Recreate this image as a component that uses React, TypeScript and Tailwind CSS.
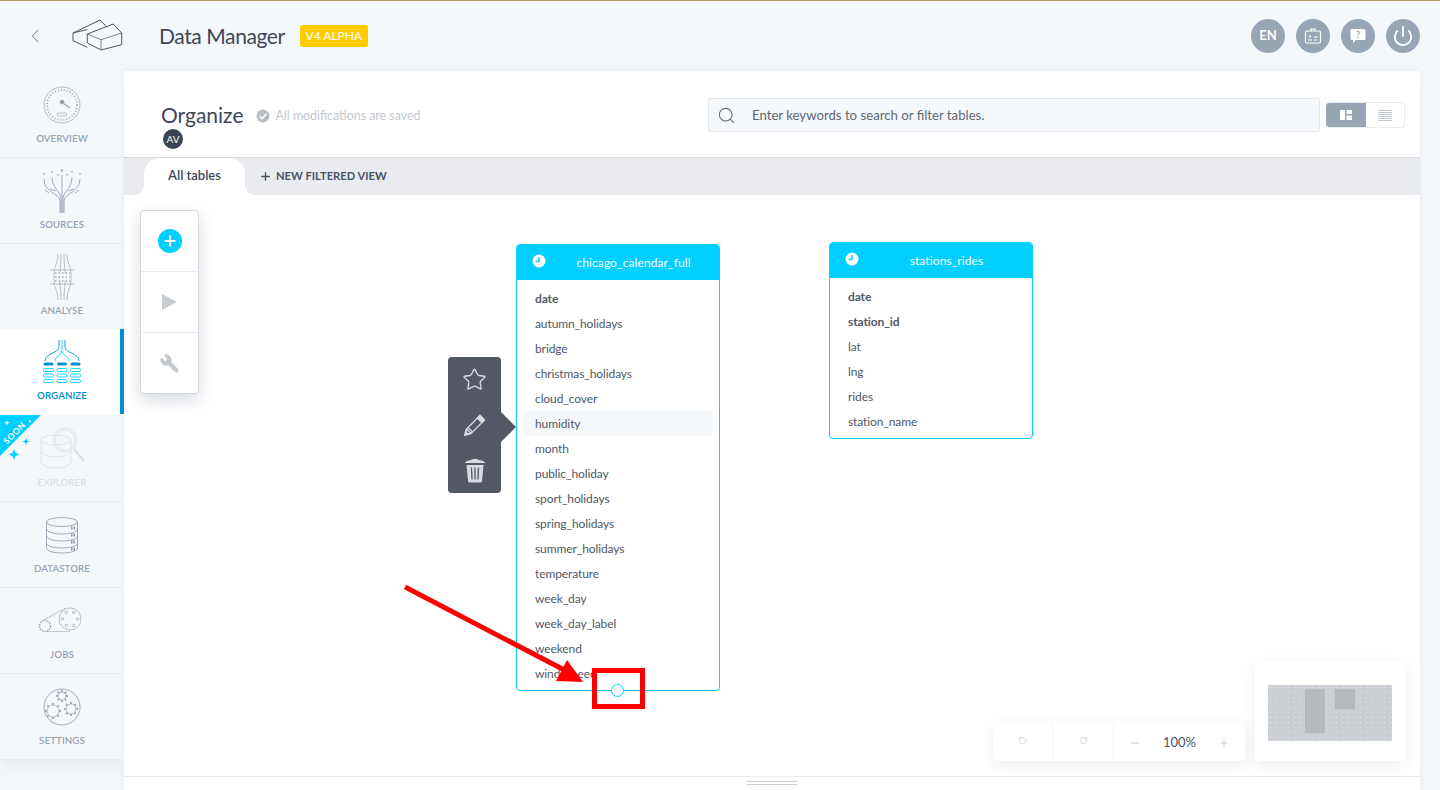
import { Plus, Search, Star, Wrench, ChevronLeft, RotateCcw, RotateCw, Minus, Power } from "lucide-react";

const font = "font-['Lato','Noto_Sans',sans-serif]";

const OverviewIcon = () => (
  <svg width="48" height="48" viewBox="0 0 48 48" fill="none" stroke="#a3adba" strokeWidth="0.8">
    <circle cx="24" cy="24" r="18" />
    <circle cx="24" cy="24" r="15" strokeDasharray="1 2" strokeWidth="2" />
    <circle cx="24" cy="21" r="2" fill="#8e99a9" />
    <path d="M25 22l7 5" strokeWidth="1.2" />
    <rect x="19" y="32" width="10" height="3" rx="1.5" />
  </svg>
);

const SourcesIcon = () => (
  <svg width="48" height="48" viewBox="0 0 48 48" fill="none" stroke="#98a3b3" strokeWidth="0.9">
    <path d="M22 46V34C22 26 6 26 6 12" />
    <path d="M23 46V32C23 24 14 22 14 10" />
    <path d="M24 46V8" />
    <path d="M25 46V32C25 24 34 22 34 10" />
    <path d="M26 46V34C26 26 42 26 42 12" />
    <path d="M11 26l-4-3M37 26l4-3M18 24l-6 -2M30 24l6-2" />
    <path d="M6 6v1.500M14 4v1.500M20 7v1.500M24 2v3M29 7v1.500M34 4v1.500M42 6v1.500" strokeWidth="1.400" />
  </svg>
);

const AnalyseIcon = () => (
  <svg width="48" height="48" viewBox="0 0 48 48" fill="none" stroke="#a3adba" strokeWidth="0.8">
    <path d="M20 1c0 10-4 12-4 19v8c0 7 4 9 4 19M23 1c0 10-1 12-1 19M26 1c0 10 1 12 1 19M29 1c0 10 4 12 4 19v8c0 7-4 9-4 19M23 47c0-10-1-12-1-19M26 47c0-10 1-12 1-19" />
    <path d="M12 17h24M12 31h24" />
    <path d="M17 20h15M17 24h15M17 28h15" strokeDasharray="1.5 2" strokeWidth="1.5" />
  </svg>
);

const OrganizeIcon = () => (
  <svg width="48" height="48" viewBox="0 0 48 48" fill="none" stroke="#00cfff" strokeWidth="0.9">
    <path d="M21 2v7c0 6-14 6-14 14" stroke="#0090cf" />
    <path d="M27 2v7c0 6 14 6 14 14" stroke="#0090cf" />
    <path d="M24 2v11c0 4-7 5-7 10M24 13c0 4 7 5 7 10" />
    <path d="M7 26h7M20.500 26h7M34 26h7" stroke="#0090cf" strokeWidth="3" strokeLinecap="round" />
    {[7, 20.5, 34].map((x) => (
      <g key={x}>
        <rect x={x - 1.5} y="30.500" width="10" height="3" rx="1.200" />
        <rect x={x - 1.5} y="36" width="10" height="3" rx="1.200" />
        <rect x={x - 1.5} y="41.500" width="10" height="3" rx="1.200" />
      </g>
    ))}
  </svg>
);

const ExplorerIcon = () => (
  <svg width="56" height="48" viewBox="0 0 56 48" fill="none" stroke="#dcdfe3" strokeWidth="0.9">
    <ellipse cx="22" cy="15" rx="15" ry="5" />
    <path d="M7 15v22c0 3 7 6 15 6s15-3 15-6V15M7 26c0 3 7 6 15 6s15-3 15-6" />
    <circle cx="31" cy="15" r="12" />
    <circle cx="31" cy="15" r="10" />
    <path d="M40 24l10 12" strokeWidth="2.2" />
  </svg>
);

const DatastoreIcon = () => (
  <svg width="48" height="48" viewBox="0 0 48 48" fill="none" stroke="#8b97a9" strokeWidth="0.8">
    <ellipse cx="24" cy="11" rx="15.5" ry="4.5" />
    <path d="M8.5 11v26c0 3 7 5 15.5 5s15.500-2 15.500-5V11M8.500 18c0 3 7 5 15.500 5s15.500-2 15.500-5M8.500 25c0 3 7 5 15.500 5s15.500-2 15.500-5M8.500 32c0 3 7 5 15.500 5s15.500-2 15.500-5" />
    <path d="M33 17h5M33 24h5M33 31h5M33 38h4" strokeWidth="3" strokeDasharray="1.5 1" />
  </svg>
);

const JobsIcon = () => (
  <svg width="48" height="48" viewBox="0 0 48 48" fill="none" stroke="#a3adba" strokeWidth="0.8">
    <circle cx="32" cy="22" r="11" />
    <circle cx="7" cy="29" r="5.500" strokeWidth="1.500" strokeDasharray="1.500 1" />
    <path d="M5 23.500L27 11.500M7 34.500h25" strokeDasharray="1 0.6" strokeWidth="1.100" />
    {[0, 60, 120, 180, 240, 300].map((a) => (
      <circle key={a} cx={32 + 7.500 * Math.cos((a * Math.PI) / 180)} cy={22 + 7.500 * Math.sin((a * Math.PI) / 180)} r="1.300" />
    ))}
  </svg>
);

const gearTeeth = (cx: number, cy: number, r: number) =>
  [0, 45, 90, 135, 180, 225, 270, 315].map((a) => (
    <path
      key={a}
      d={`M${cx + r * Math.cos((a * Math.PI) / 180)} ${cy + r * Math.sin((a * Math.PI) / 180)}L${cx + (r + 2) * Math.cos((a * Math.PI) / 180)} ${cy + (r + 2) * Math.sin((a * Math.PI) / 180)}`}
      strokeWidth="2"
    />
  ));

const SettingsIcon = () => (
  <svg width="48" height="48" viewBox="0 0 48 48" fill="none" stroke="#a3adba" strokeWidth="0.8">
    <circle cx="24" cy="24" r="18" stroke="#8b97a9" />
    <circle cx="24" cy="13" r="4" />
    {gearTeeth(24, 13, 4)}
    <circle cx="15" cy="28" r="6" />
    {gearTeeth(15, 28, 6)}
    <circle cx="33" cy="26" r="5" />
    {gearTeeth(33, 26, 5)}
  </svg>
);

const navItems = [
  { label: "Overview", icon: <OverviewIcon /> },
  { label: "Sources", icon: <SourcesIcon /> },
  { label: "Analyse", icon: <AnalyseIcon /> },
  { label: "Organize", icon: <OrganizeIcon />, active: true },
  { label: "Explorer", icon: <ExplorerIcon />, soon: true },
  { label: "Datastore", icon: <DatastoreIcon /> },
  { label: "Jobs", icon: <JobsIcon /> },
  { label: "Settings", icon: <SettingsIcon /> },
];

const Sidebar = () => (
  <div className="w-[124px] shrink-0 pt-px">
    <div className="shadow-[0_6px_12px_rgba(120,135,155,0.12)]">
      {navItems.map((item) => (
        <div
          key={item.label}
          className={`relative flex h-[86px] flex-col items-center border-b pt-[9px] ${
            item.active ? "-mt-px mb-px border-white bg-white" : "border-[#e8ecf1]"
          }`}
        >
          <div className="flex h-12 items-center justify-center">{item.icon}</div>
          <span
            className={`mt-[2px] text-[9.700px] leading-[14px] font-semibold tracking-[0.1px] uppercase ${
              item.active ? "font-bold text-[#0090cf]" : item.soon ? "text-[#dcdfe3]" : "text-[#98a3b3]"
            }`}
          >
            {item.label}
          </span>
          {item.active && <div className="absolute top-0 right-0 bottom-0 w-1 bg-[#0090cf]" />}
          {item.soon && <SoonRibbon />}
        </div>
      ))}
    </div>
  </div>
);

const SoonRibbon = () => (
  <div className="absolute top-[-1px] left-0">
    <svg width="42" height="46" viewBox="0 0 42 46">
      <path d="M0 0H41L0 41Z" fill="#00cfff" />
      <path d="M14 34l1.500 4 4 1.500-4 1.500-1.500 4-1.500-4-4-1.500 4-1.500zM26 23l1 2.500 2.500 1-2.500 1-1 2.500-1-2.500-2.500-1 2.500-1z" fill="#00cfff" />
      <path d="M7 5l.8 2 2 .8-2 .8-.8 2-.8-2-2-.8 2-.8zM30 4.500l.5 1.300 1.300.5-1.300.5-.5 1.300-.5-1.300-1.300-.5 1.300-.5z" fill="#fff" />
    </svg>
    <span className="absolute top-[13px] left-[1px] -rotate-45 text-[8.500px] leading-[10px] font-bold tracking-[0.5px] text-white">
      SOON
    </span>
  </div>
);

const Logo = () => (
  <svg width="52" height="34" viewBox="0 0 52 34" fill="none" stroke="#4a5464" strokeWidth="1">
    <path d="M15.300 10.500L1 14v7.700l14.300 6.600M1 14L28 1l7 7.300" />
    <path d="M15.300 15L41.300 5l8.400 9v11.700L29 31l-13.700-7V15" />
    <path d="M15.300 15L29 20.700V31M29 20.700L49.700 14" strokeWidth="0.7" />
  </svg>
);

const CircleBtn = ({ children }: { children: React.ReactNode }) => (
  <div className="flex h-[34px] w-[34px] items-center justify-center rounded-full bg-[#98a5b5] text-[13px] font-bold text-white">
    {children}
  </div>
);

const TopBar = () => (
  <div className="flex h-[71px] shrink-0 items-center border-t border-[#b89a6b] pr-[20px] pl-[24px]">
    <ChevronLeft size={22} strokeWidth={1} className="text-[#5d6675]" />
    <div className="ml-[26px]">
      <Logo />
    </div>
    <span className="ml-[35px] text-[21px] tracking-[-0.4px] text-[#3e4757]">Data Manager</span>
    <span className="ml-[15px] flex h-[22px] w-[68px] items-center justify-center rounded-[2px] bg-[#ffcc00] text-[12px] text-white">
      V4 ALPHA
    </span>
    <div className="ml-auto flex gap-[11px]">
      <CircleBtn>EN</CircleBtn>
      <CircleBtn>
        <svg width="20" height="20" viewBox="0 0 20 20" fill="none" stroke="#fff" strokeWidth="1.200">
          <rect x="2.500" y="5" width="15" height="12" rx="1.500" />
          <path d="M8 5V3h4v2M5 14h4M11 11h4M11 14h3M7 9v3" />
        </svg>
      </CircleBtn>
      <CircleBtn>
        <svg width="20" height="20" viewBox="0 0 20 20">
          <path d="M4 3h12a1.500 1.500 0 0 1 1.500 1.500v8A1.500 1.500 0 0 1 16 14H8l-3 3v-3H4a1.500 1.500 0 0 1-1.500-1.500v-8A1.500 1.500 0 0 1 4 3z" fill="#fff" />
          <text x="10" y="12" textAnchor="middle" fontSize="9" fontWeight="700" fill="#98a5b5">?</text>
        </svg>
      </CircleBtn>
      <CircleBtn>
        <Power size={22} strokeWidth={2} />
      </CircleBtn>
    </div>
  </div>
);

const PanelHeader = () => (
  <div className="flex h-[86px] shrink-0 items-start pt-[27px] pr-[15px] pl-[37px]">
    <div>
      <div className="flex items-center">
        <span className="text-[21px] leading-[34px] text-[#3e4757]">Organize</span>
        <svg width="14" height="14" viewBox="0 0 14 14" className="mt-[2px] ml-[12px]">
          <circle cx="7" cy="7" r="6.500" fill="#b9bec6" />
          <path d="M3.800 7.200l2.300 2.300 4.300-4.600" fill="none" stroke="#fff" strokeWidth="1.600" />
        </svg>
        <span className="mt-[2px] ml-[6px] text-[12.400px] text-[#c5c9ce]">All modifications are saved</span>
      </div>
      <div className="-mt-[3px] ml-[2px] flex h-5 w-5 items-center justify-center rounded-full bg-[#3c4353] text-[10px] text-white">
        AV
      </div>
    </div>
    <div className="ml-auto flex items-center">
      <div className="flex h-[34px] w-[612px] items-center rounded-[2px] border border-[#e4e8ed] bg-[#f6f9fc] pl-[8px]">
        <Search size={19} strokeWidth={1.300} className="text-[#5f6b7b]" />
        <span className="mt-px ml-[16px] text-[13.200px] text-[#5d6675]">Enter keywords to search or filter tables.</span>
      </div>
      <div className="ml-[6px] flex h-[26px] w-[79px] overflow-hidden rounded-[4px] border border-l-0 border-[#e8ecf1]">
        <div className="flex w-[40px] items-center justify-center bg-[#98a5b5]">
          <svg width="12" height="10" viewBox="0 0 12 10" fill="#fff">
            <rect width="5" height="10" />
            <rect x="6.500" width="5.500" height="4" />
            <rect x="6.500" y="5.500" width="5.500" height="4.500" />
          </svg>
        </div>
        <div className="flex flex-1 items-center justify-center">
          <svg width="14" height="11" viewBox="0 0 14 11" stroke="#c3c8cf" strokeWidth="1">
            <path d="M0 .500h14M0 2.500h14M0 4.500h14M0 6.500h14M0 8.500h14M0 10.500h14" />
          </svg>
        </div>
      </div>
    </div>
  </div>
);

const TabBar = () => (
  <div className="flex h-[38px] shrink-0 items-end border-t border-dotted border-[#c4c9d0] bg-[#e9ebef] pl-[20px]">
    <div className="relative flex h-[37px] w-[101px] items-center justify-center rounded-t-[16px] bg-white pb-[1px] text-[13px] font-semibold text-[#3e4757] before:absolute before:bottom-0 before:left-[-10px] before:h-[10px] before:w-[10px] before:bg-[radial-gradient(circle_at_0_0,transparent_10px,white_10px)] after:absolute after:right-[-10px] after:bottom-0 after:h-[10px] after:w-[10px] after:bg-[radial-gradient(circle_at_100%_0,transparent_10px,white_10px)]">
      All tables
    </div>
    <div className="ml-[14px] flex h-[37px] items-center gap-[4px] text-[11.200px] font-bold text-[#4a5362]">
      <Plus size={13} strokeWidth={2.500} />
      NEW FILTERED VIEW
    </div>
  </div>
);

const Toolbar = () => (
  <div className="absolute top-[15px] left-[16px] flex h-[184px] w-[59px] flex-col divide-y divide-[#e9ecf0] rounded-[4px] border border-[#d3d8de] bg-white shadow-[0_6px_16px_rgba(120,135,155,0.3)]">
    <div className="flex h-[61px] items-center justify-center">
      <div className="flex h-6 w-6 items-center justify-center rounded-full bg-[#00cfff]">
        <Plus size={16} strokeWidth={3} className="text-white" />
      </div>
    </div>
    <div className="flex h-[61px] items-center justify-center">
      <svg width="15" height="16" viewBox="0 0 15 16">
        <path d="M0 0L15 8L0 16Z" fill="#c9cdd3" />
      </svg>
    </div>
    <div className="flex flex-1 items-center justify-center">
      <Wrench size={21} fill="#c4c8ce" strokeWidth={1} className="-scale-x-100 text-[#c4c8ce]" />
    </div>
  </div>
);

const ColumnMenu = () => (
  <div className="absolute top-[162px] left-[324px] flex h-[136px] w-[53px] flex-col items-center justify-between rounded-[4px] bg-[#535864] py-[10px] text-[#d8dbdf]">
    <Star size={25} strokeWidth={1.300} />
    <svg width="24" height="24" viewBox="0 0 24 24" fill="none" stroke="#d8dbdf" strokeWidth="1.300">
      <path d="M17 2.500L21.500 7 8 20.500 2 22l1.500-6z" />
      <path d="M14.500 5l4.500 4.500M5 14.500l4.500 4.500M2 22l1.500-6 4.500 4.500z" />
      <path d="M17 2.500L21.500 7l-2.500 2.500L14.500 5z" fill="#d8dbdf" />
      <path d="M2 22l.7-3 2.300 2.300z" fill="#d8dbdf" />
    </svg>
    <svg width="22" height="25" viewBox="0 0 22 25">
      <path d="M1 5c0-1.500 2-2.500 6-3 .5-1.500 7.500-1.500 8 0 4 .5 6 1.500 6 3z" fill="#d8dbdf" />
      <path d="M2.500 7h17l-1.500 16c-.1 1-1 1.500-2 1.500H6c-1 0-1.900-.5-2-1.500z" fill="#d8dbdf" />
      <path d="M7.500 9.500l.5 12M11 9.500v12M14.500 9.500l-.5 12" stroke="#535864" strokeWidth="1.300" />
    </svg>
    <div className="absolute top-[55px] left-[53px] h-0 w-0 border-y-[15px] border-l-[15px] border-y-transparent border-l-[#535864]" />
  </div>
);

type NodeProps = {
  className: string;
  title: string;
  columns: string[];
  bold: string[];
  hover?: string;
};

const TableNode = ({ className, title, columns, bold, hover }: NodeProps) => (
  <div className={`absolute w-[204px] rounded-[4px] border border-[#00cfff] bg-white ${className}`}>
    <div className="relative flex h-[35px] items-center justify-center rounded-t-[3px] bg-[#00cfff] pl-[31px] text-[12px] tracking-[0.1px] text-white">
      <svg width="14" height="14" viewBox="0 0 14 14" className="absolute top-[9px] left-[15px]">
        <circle cx="7" cy="7" r="6.500" fill="#fff" />
        <path d="M7 3v4.500H3.500" fill="none" stroke="#00cfff" strokeWidth="1.500" />
      </svg>
      {title}
    </div>
    <div className="px-[6px] pt-[6px]">
      {columns.map((c) => (
        <div
          key={c}
          className={`h-[25px] rounded-[3px] px-[12px] text-[12px] leading-[25px] tracking-[-0.1px] text-[#505866] ${
            bold.includes(c) ? "font-bold text-[#3e4757]" : ""
          } ${hover === c ? "bg-[#f5f8fb]" : ""}`}
        >
          {c}
        </div>
      ))}
    </div>
  </div>
);

const ZoomBar = () => (
  <div className="absolute top-[527px] left-[869px] flex h-[39px] w-[252px] items-center rounded-[4px] bg-white text-[#c9cdd3] shadow-[0_4px_14px_rgba(120,135,155,0.14)]">
    <div className="flex h-full w-[60px] items-center justify-center border-r border-[#f1f3f6] pb-[2px]">
      <RotateCcw size={9} strokeWidth={2} />
    </div>
    <div className="flex h-full w-[61px] items-center justify-center border-r border-[#f1f3f6] pb-[2px]">
      <RotateCw size={9} strokeWidth={2} />
    </div>
    <div className="flex flex-1 items-center justify-between px-[15px] pt-[3px]">
      <Minus size={12} />
      <span className="text-[13px] text-[#4a5362]">100%</span>
      <Plus size={12} />
    </div>
  </div>
);

const Minimap = () => (
  <div className="absolute top-[466px] left-[1131px] flex h-[100px] w-[150px] items-start justify-center bg-white pt-[24px] shadow-[0_4px_14px_rgba(120,135,155,0.14)]">
    <svg width="124" height="56" viewBox="0 0 124 56">
      <defs>
        <pattern id="mini-dots" width="6" height="5" patternUnits="userSpaceOnUse">
          <rect width="6" height="5" fill="#cbced3" />
          <rect x="2" y="2" width="1" height="1" fill="#e4e6e9" />
        </pattern>
        <pattern id="mini-block" width="2" height="2" patternUnits="userSpaceOnUse">
          <rect width="2" height="2" fill="#b3b6bb" />
          <rect width="1" height="1" fill="#bfc2c6" />
        </pattern>
      </defs>
      <rect width="124" height="56" fill="url(#mini-dots)" />
      <rect x="37" y="4" width="20" height="44" fill="url(#mini-block)" />
      <rect x="67" y="4" width="20" height="20" fill="url(#mini-block)" />
    </svg>
  </div>
);

const Annotation = () => (
  <>
    <svg className="absolute top-[390px] left-[280px]" width="180" height="100" viewBox="0 0 180 100">
      <path d="M1 2L168 89" stroke="#ff0000" strokeWidth="5" />
      <path d="M163 75L152 96L179 97Z" fill="#ff0000" />
    </svg>
    <div className="absolute top-[473px] left-[468px] h-[41px] w-[53px] border-[5px] border-[#ff0000]" />
  </>
);

const calendarColumns = [
  "date",
  "autumn_holidays",
  "bridge",
  "christmas_holidays",
  "cloud_cover",
  "humidity",
  "month",
  "public_holiday",
  "sport_holidays",
  "spring_holidays",
  "summer_holidays",
  "temperature",
  "week_day",
  "week_day_label",
  "weekend",
  "wind_speed",
];

const stationColumns = ["date", "station_id", "lat", "lng", "rides", "station_name"];

export default function App() {
  return (
    <div className={`flex h-screen w-full flex-col overflow-hidden bg-[#f5f8fb] ${font}`}>
      <TopBar />
      <div className="flex min-h-0 flex-1">
        <Sidebar />
        <div className="mr-[20px] flex min-w-0 flex-1 flex-col bg-white shadow-[0_0_10px_rgba(120,135,155,0.1)]">
          <PanelHeader />
          <TabBar />
          <div className="relative flex-1">
            <Toolbar />
            <ColumnMenu />
            <TableNode
              className="top-[49px] left-[392px] h-[447px]"
              title="chicago_calendar_full"
              columns={calendarColumns}
              bold={["date"]}
              hover="humidity"
            />
            <div className="absolute top-[489px] left-[487px] h-[13px] w-[13px] rounded-full border border-[#00cfff] bg-white" />
            <TableNode
              className="top-[47px] left-[705px] h-[197px]"
              title="stations_rides"
              columns={stationColumns}
              bold={["date", "station_id"]}
            />
            <ZoomBar />
            <Minimap />
            <Annotation />
          </div>
          <div className="flex h-[14px] shrink-0 flex-col items-center gap-[2px] border-t border-[#e8ecf1] pt-[4px]">
            <div className="h-px w-[50px] bg-[#c9cdd3]" />
            <div className="h-px w-[50px] bg-[#c9cdd3]" />
          </div>
        </div>
      </div>
    </div>
  );
}
